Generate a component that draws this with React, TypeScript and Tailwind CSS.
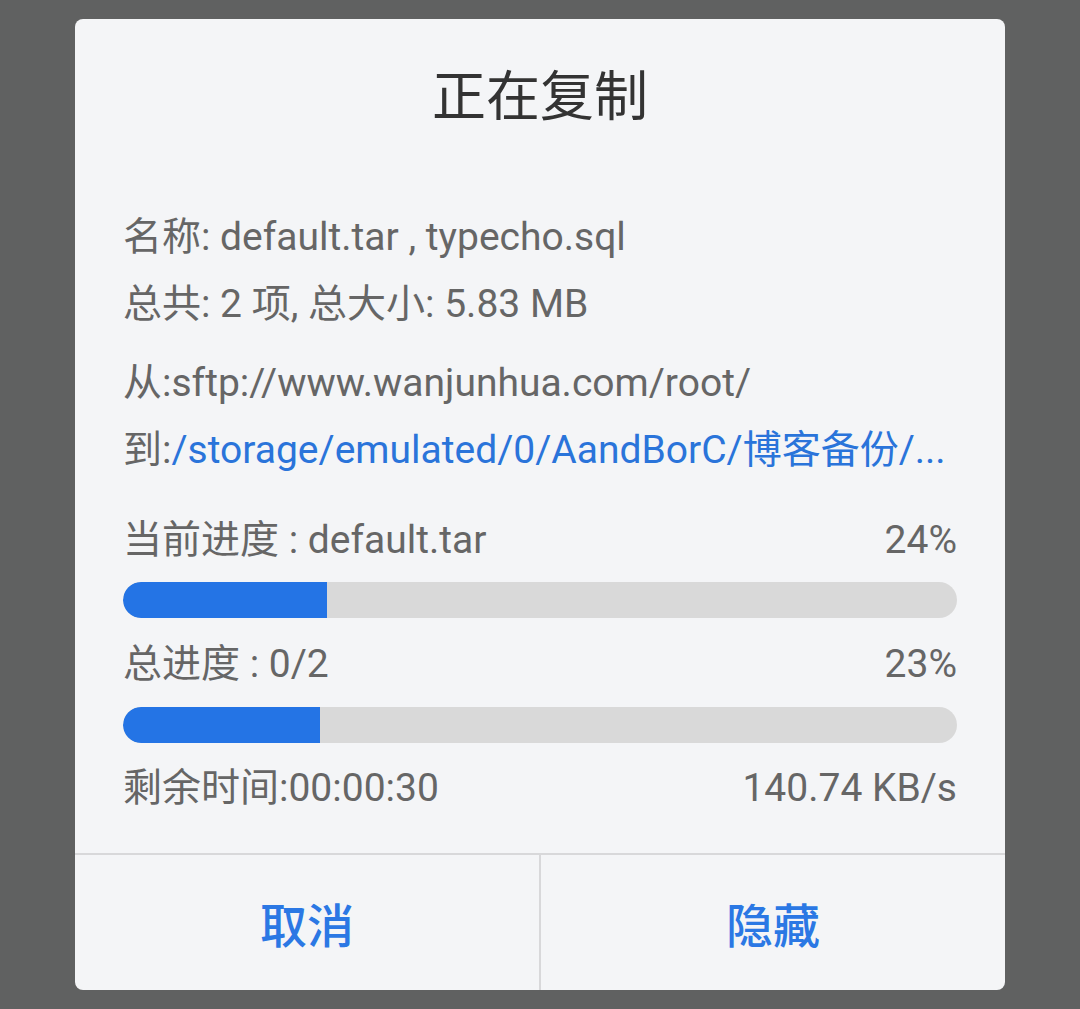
import React from "react";

const font = { fontFamily: '"Roboto", "Noto Sans CJK SC", sans-serif' };

const Bar: React.FC<{ pct: number }> = ({ pct }) => (
    <div className="h-[36px] w-full rounded-full bg-[#d9d9d9] overflow-hidden">
        <div className="h-full rounded-l-full bg-[#2474e5]" style={{ width: `${pct}%` }} />
    </div>
);

export default function App() {
    return (
        <div className="w-full h-[1009px] bg-[#606161] pt-[19px] flex justify-center" style={font}>
            <div className="w-[930px] h-[971px] bg-[#f4f5f7] rounded-[8px] flex flex-col overflow-hidden">
                <div className="h-[156px] flex items-center justify-center text-[54px] text-[#333333]">正在复制</div>
                <div className="px-[48px] text-[39px] text-[#666666] flex flex-col mt-[29px]">
                    <div className="h-[66px] leading-[66px] whitespace-nowrap">名称: default.tar , typecho.sql</div>
                    <div className="h-[66px] leading-[66px] mt-[1px] whitespace-nowrap">总共: 2 项, 总大小: 5.83 MB</div>
                    <div className="h-[66px] leading-[66px] mt-[13px] whitespace-nowrap">从:sftp://www.wanjunhua.com/root/</div>
                    <div className="h-[66px] leading-[66px] mt-[1px] whitespace-nowrap">
                        到:<span className="text-[#2a74da]">/storage/emulated/0/AandBorC/博客备份/...</span>
                    </div>
                    <div className="h-[66px] leading-[66px] mt-[24px] flex justify-between">
                        <span>当前进度 : default.tar</span>
                        <span>24%</span>
                    </div>
                    <div className="mt-[9px]">
                        <Bar pct={24.5} />
                    </div>
                    <div className="h-[66px] leading-[66px] mt-[13px] flex justify-between">
                        <span>总进度 : 0/2</span>
                        <span>23%</span>
                    </div>
                    <div className="mt-[10px]">
                        <Bar pct={23.6} />
                    </div>
                    <div className="h-[66px] leading-[66px] mt-[12px] flex justify-between">
                        <span>剩余时间:00:00:30</span>
                        <span>140.74 KB/s</span>
                    </div>
                </div>
                <div className="mt-auto h-[137px] border-t-2 border-[#d8d8da] flex">
                    <button className="flex-1 flex items-center justify-center pt-[10px] text-[47px] font-medium text-[#2b78e4] border-r-2 border-[#d8d8da]">
                        取消
                    </button>
                    <button className="flex-1 flex items-center justify-center pt-[10px] text-[47px] font-medium text-[#2b78e4]">
                        隐藏
                    </button>
                </div>
            </div>
        </div>
    );
}
